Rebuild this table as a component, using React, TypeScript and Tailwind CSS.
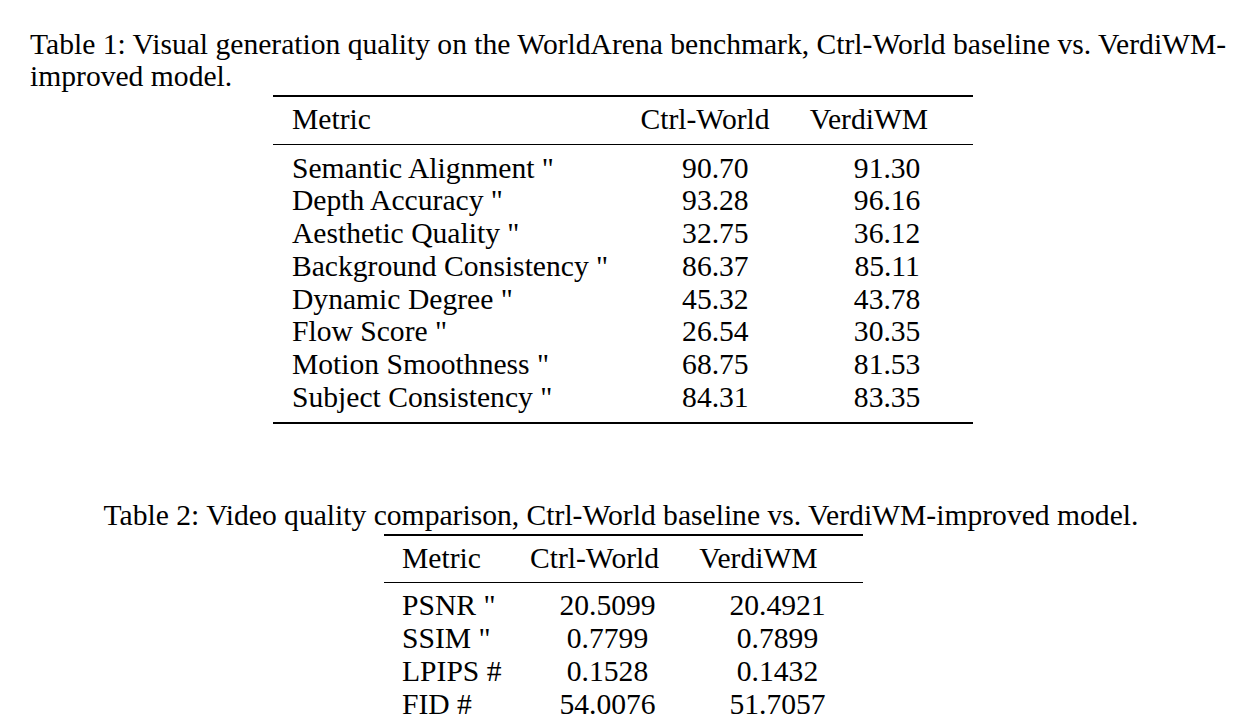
import React from "react";

const t1 = [
  ["Semantic Alignment \"", "90.70", "91.30"],
  ["Depth Accuracy \"", "93.28", "96.16"],
  ["Aesthetic Quality \"", "32.75", "36.12"],
  ["Background Consistency \"", "86.37", "85.11"],
  ["Dynamic Degree \"", "45.32", "43.78"],
  ["Flow Score \"", "26.54", "30.35"],
  ["Motion Smoothness \"", "68.75", "81.53"],
  ["Subject Consistency \"", "84.31", "83.35"],
];

const t2 = [
  ["PSNR \"", "20.5099", "20.4921"],
  ["SSIM \"", "0.7799", "0.7899"],
  ["LPIPS #", "0.1528", "0.1432"],
  ["FID #", "54.0076", "51.7057"],
];

export default function App() {
  return (
    <div
      className="w-[1242px] h-[720px] overflow-hidden bg-white text-black text-[29.6px]"
      style={{ fontFamily: '"Liberation Serif", "Times New Roman", serif' }}
    >
      <div className="px-[30px] pt-[28px] leading-[32px]">
        <div className="text-justify [text-align-last:justify] whitespace-nowrap">
          Table 1: Visual generation quality on the WorldArena benchmark, Ctrl-World baseline vs. VerdiWM-
        </div>
        <div>improved model.</div>
      </div>

      <div className="ml-[273px] w-[700px] mt-[3px]">
        <div className="h-[2px] bg-black" />
        <div className="flex pt-[6px] pb-[8px] leading-[32.7px]">
          <div className="w-[350px] pl-[19px]">Metric</div>
          <div className="w-[164px] text-center">Ctrl-World</div>
          <div className="w-[164px] text-center">VerdiWM</div>
        </div>
        <div className="h-[1px] bg-black" />
        <div className="pt-[7px] pb-[8.5px] leading-[32.7px]">
          {t1.map((r) => (
            <div key={r[0]} className="flex">
              <div className="w-[357px] pl-[19px] whitespace-nowrap">{r[0]}</div>
              <div className="w-[172px] text-center">{r[1]}</div>
              <div className="w-[172px] text-center">{r[2]}</div>
            </div>
          ))}
        </div>
        <div className="h-[2px] bg-black" />
      </div>

      <div className="px-[30px] mt-[75px] leading-[32px] text-center whitespace-nowrap">
        Table 2: Video quality comparison, Ctrl-World baseline vs. VerdiWM-improved model.
      </div>

      <div className="ml-[384px] w-[479px] mt-[3px]">
        <div className="h-[2px] bg-black" />
        <div className="flex pt-[6.5px] pb-[7px] leading-[33px]">
          <div className="w-[128.5px] pl-[18px]">Metric</div>
          <div className="w-[164px] text-center">Ctrl-World</div>
          <div className="w-[164px] text-center">VerdiWM</div>
        </div>
        <div className="h-[1px] bg-black" />
        <div className="pt-[6px] leading-[33px]">
          {t2.map((r) => (
            <div key={r[0]} className="flex">
              <div className="w-[138.5px] pl-[18px] whitespace-nowrap">{r[0]}</div>
              <div className="w-[170px] text-center">{r[1]}</div>
              <div className="w-[170px] text-center">{r[2]}</div>
            </div>
          ))}
        </div>
        <div className="h-[2px] bg-black" />
      </div>
    </div>
  );
}
